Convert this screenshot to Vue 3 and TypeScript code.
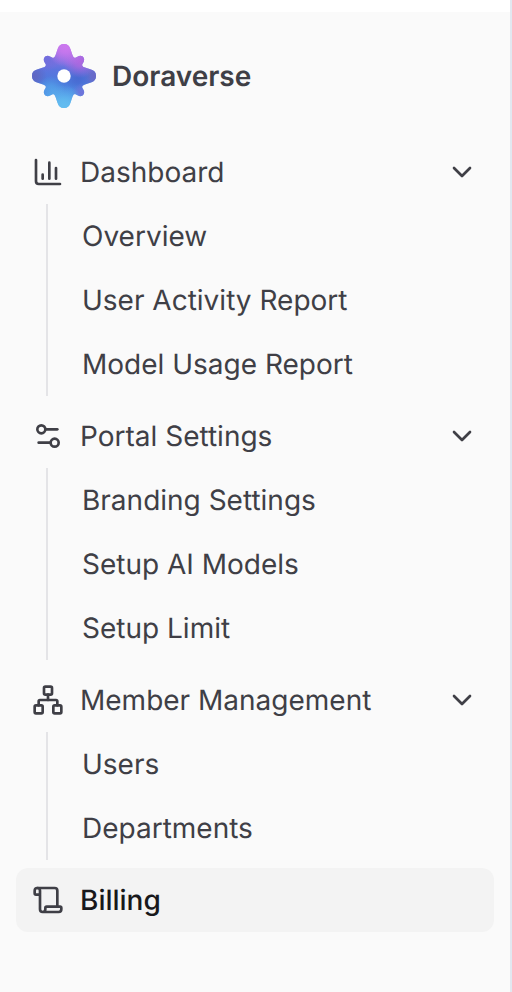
<script setup lang="ts">
type IconName = 'chart' | 'sliders' | 'network' | 'scroll'

interface MenuItem {
  label: string
  icon: IconName
  children?: string[]
  active?: boolean
}

interface Glow {
  id: string
  x: number
  y: number
  r: number
  color: string
}

const glows: Glow[] = [
  { id: 'glow-left', x: 2, y: 32, r: 13, color: '#5f66c2' },
  { id: 'glow-left-lobe', x: 15, y: 15, r: 13, color: '#706edc' },
  { id: 'glow-right', x: 63, y: 32, r: 13, color: '#6a68c6' },
  { id: 'glow-center-right', x: 46, y: 34, r: 13, color: '#486ad2' },
  { id: 'glow-right-lobe', x: 48, y: 17, r: 17, color: '#b068e0' },
  { id: 'glow-top', x: 34, y: 3, r: 20, color: '#cc78ee' },
  { id: 'glow-low-left', x: 19, y: 46, r: 14, color: '#549ee8' },
  { id: 'glow-low-right', x: 50, y: 49, r: 10, color: '#7072da' },
  { id: 'glow-bottom', x: 31, y: 63, r: 22, color: '#62bcf0' },
]

const icons: Record<IconName, string[]> = {
  chart: ['M3 3v16a2 2 0 0 0 2 2h16', 'M18 17V9', 'M13 17V5', 'M8 17v-3'],
  sliders: [
    'M14 17H5',
    'M19 7h-9',
    'M20 17a3 3 0 1 1-6 0a3 3 0 1 1 6 0z',
    'M10 7a3 3 0 1 1-6 0a3 3 0 1 1 6 0z',
  ],
  network: [
    'M17 16h4a1 1 0 0 1 1 1v4a1 1 0 0 1-1 1h-4a1 1 0 0 1-1-1v-4a1 1 0 0 1 1-1z',
    'M3 16h4a1 1 0 0 1 1 1v4a1 1 0 0 1-1 1H3a1 1 0 0 1-1-1v-4a1 1 0 0 1 1-1z',
    'M10 2h4a1 1 0 0 1 1 1v4a1 1 0 0 1-1 1h-4a1 1 0 0 1-1-1V3a1 1 0 0 1 1-1z',
    'M5 16v-3a1 1 0 0 1 1-1h12a1 1 0 0 1 1 1v3',
    'M12 12V8',
  ],
  scroll: [
    'M19 17V5a2 2 0 0 0-2-2H4',
    'M8 21h12a2 2 0 0 0 2-2v-1a1 1 0 0 0-1-1H11a1 1 0 0 0-1 1v1a2 2 0 1 1-4 0V5a2 2 0 1 0-4 0v2a1 1 0 0 0 1 1h3',
  ],
}

const menu: MenuItem[] = [
  { label: 'Dashboard', icon: 'chart', children: ['Overview', 'User Activity Report', 'Model Usage Report'] },
  { label: 'Portal Settings', icon: 'sliders', children: ['Branding Settings', 'Setup AI Models', 'Setup Limit'] },
  { label: 'Member Management', icon: 'network', children: ['Users', 'Departments'] },
  { label: 'Billing', icon: 'scroll', active: true },
]
</script>

<template>
  <div class="panel">
    <aside class="sidebar">
      <header class="brand">
        <svg class="logo" viewBox="0 0 64 64">
          <defs>
            <linearGradient id="petals" x1="0" y1="0" x2="0" y2="1">
              <stop offset="0" stop-color="#c474ec" />
              <stop offset="0.2" stop-color="#8a70e2" />
              <stop offset="0.4" stop-color="#5c74de" />
              <stop offset="0.6" stop-color="#4c7adc" />
              <stop offset="0.8" stop-color="#5094e6" />
              <stop offset="1" stop-color="#60bcf0" />
            </linearGradient>
            <radialGradient
              v-for="glow in glows"
              :id="glow.id"
              :key="glow.id"
              gradientUnits="userSpaceOnUse"
              :cx="glow.x"
              :cy="glow.y"
              :r="glow.r"
            >
              <stop offset="0" :stop-color="glow.color" />
              <stop offset="0.3" :stop-color="glow.color" stop-opacity="0.8" />
              <stop offset="1" :stop-color="glow.color" stop-opacity="0" />
            </radialGradient>
            <clipPath id="flower">
              <path
                d="M0 32C0 28.500 1.500 26.800 5 25.600L11 23.600Q14.800 22.400 13.600 20L12.400 18C10.400 14 14 10.400 18 12.400L20 13.600Q22.400 14.800 23.600 11L25.600 5C26.800 1.500 28.500 0 32 0C35.500 0 37.200 1.500 38.400 5L40.400 11Q41.600 14.800 44 13.600L46 12.400C50 10.400 53.600 14 51.600 18L50.400 20Q49.200 22.400 53 23.600L59 25.600C62.500 26.800 64 28.500 64 32C64 35.500 62.500 37.200 59 38.400L53 40.400Q49.200 41.600 50.400 44L51.600 46C53.600 50 50 53.600 46 51.600L44 50.400Q41.600 49.200 40.400 53L38.400 59C37.200 62.500 35.500 64 32 64C28.500 64 26.800 62.500 25.600 59L23.600 53Q22.400 49.200 20 50.400L18 51.600C14 53.600 10.400 50 12.400 46L13.600 44Q14.800 41.600 11 40.400L5 38.400C1.500 37.200 0 35.500 0 32Z"
              />
            </clipPath>
          </defs>
          <g clip-path="url(#flower)">
            <rect width="64" height="64" fill="url(#petals)" />
            <rect v-for="glow in glows" :key="glow.id" width="64" height="64" :fill="`url(#${glow.id})`" />
          </g>
          <circle cx="32" cy="32" r="6.700" fill="#fff" />
        </svg>
        <span class="brand-name">Doraverse</span>
      </header>

      <nav class="menu">
        <section v-for="item in menu" :key="item.label">
          <a class="row" :class="{ active: item.active }">
            <svg class="icon" viewBox="0 0 24 24">
              <path v-for="d in icons[item.icon]" :key="d" :d="d" />
            </svg>
            <span class="label">{{ item.label }}</span>
            <svg v-if="item.children" class="icon" viewBox="0 0 24 24">
              <path d="m6 9 6 6 6-6" />
            </svg>
          </a>
          <ul v-if="item.children" class="submenu">
            <li v-for="child in item.children" :key="child">{{ child }}</li>
          </ul>
        </section>
      </nav>
    </aside>
  </div>
</template>

<style>
body {
  background: #fff;
}
</style>

<style scoped>
.panel {
  box-sizing: border-box;
  height: 992px;
  padding-top: 12px;
  border-right: 2px solid #e2e8f0;
}

.sidebar {
  box-sizing: border-box;
  height: 980px;
  padding: 32px 16px 0;
  background: #fafafa;
  color: #3f3f46;
  font-family: Inter, sans-serif;
  font-size: 28px;
  text-rendering: geometricPrecision;
}

.brand {
  display: flex;
  align-items: center;
  gap: 16px;
  height: 64px;
  padding-left: 16px;
  margin-bottom: 32px;
}

.logo {
  width: 64px;
  height: 64px;
}

.brand-name {
  font-weight: 600;
}

.menu {
  display: flex;
  flex-direction: column;
  gap: 8px;
}

.row {
  display: flex;
  align-items: center;
  gap: 16px;
  height: 64px;
  padding: 0 16px;
  box-sizing: border-box;
  border-radius: 12px;
}

.row.active {
  background: #f3f3f3;
}

.active .label {
  color: #18181b;
  font-weight: 500;
}

.label {
  flex: 1;
}

.icon {
  width: 32px;
  height: 32px;
  fill: none;
  stroke: #3f3f46;
  stroke-width: 2;
  stroke-linecap: round;
  stroke-linejoin: round;
}

.submenu {
  margin: 0 0 0 30px;
  padding: 0 0 0 34px;
  border-left: 2px solid #e4e4e7;
  list-style: none;
}

.submenu li {
  height: 64px;
  line-height: 64px;
}
</style>
